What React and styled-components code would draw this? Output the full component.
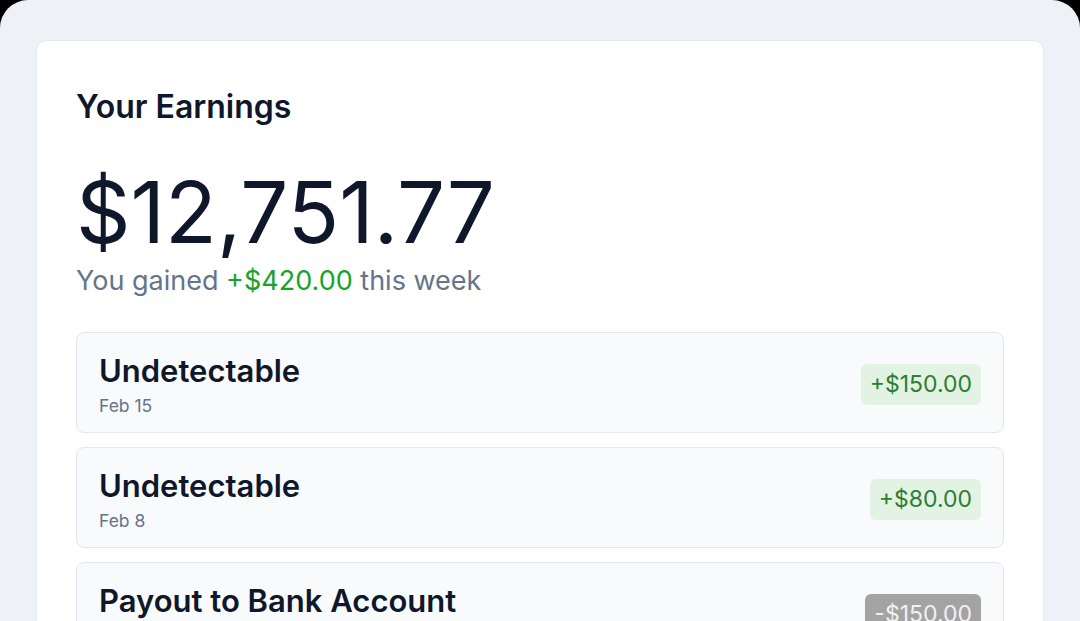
import React from "react";
import styled, { createGlobalStyle } from "styled-components";

const Global = createGlobalStyle`
  html, body { margin: 0; padding: 0; background: #000; overflow: hidden; }
  body { font-family: Inter, "Noto Sans", sans-serif; -webkit-font-smoothing: antialiased; }
`;

const Frame = styled.div`
  height: 621px;
  box-sizing: border-box;
  background: #eef2f7;
  border-radius: 28px 28px 0 0;
  padding: 40px 36px 0 36px;
  overflow: hidden;
`;

const Card = styled.section`
  background: #ffffff;
  border: 1px solid #e2e8f0;
  border-radius: 10px;
  padding: 47px 39px 40px;
  min-height: 700px;
`;

const Title = styled.h2`
  margin: 0;
  font-size: 32px;
  line-height: 38px;
  font-weight: 600;
  color: #0f172a;
`;

const Amount = styled.div`
  margin-top: 44px;
  font-size: 85px;
  line-height: 85px;
  font-weight: 400;
  color: #0f172a;
`;

const Gain = styled.p`
  margin: 10px 0 0;
  font-size: 27px;
  line-height: 32px;
  color: #64748b;
`;

const Green = styled.span`
  color: #17a32b;
`;

const List = styled.ul`
  list-style: none;
  margin: 35px 0 0;
  padding: 0;
  display: flex;
  flex-direction: column;
  gap: 14px;
`;

const Item = styled.li`
  display: flex;
  align-items: center;
  justify-content: space-between;
  background: #f8fafc;
  border: 1px solid #e2e8f0;
  border-radius: 8px;
  padding: 19px 22px 15px;
`;

const Info = styled.div`
  display: flex;
  flex-direction: column;
  gap: 5px;
`;

const ItemTitle = styled.div`
  font-size: 31px;
  line-height: 38px;
  font-weight: 600;
  color: #0f172a;
`;

const ItemDate = styled.div`
  font-size: 17.5px;
  line-height: 22px;
  color: #64748b;
`;

const Badge = styled.span`
  height: 41px;
  line-height: 41px;
  padding: 0 9px;
  border-radius: 6px;
  font-size: 23px;
  background: ${(p) => (p.$negative ? "#a3a3a3" : "#e2f2e3")};
  color: ${(p) => (p.$negative ? "#f1f1f1" : "#2e7d32")};
`;

const items = [
  { title: "Undetectable", date: "Feb 15", amount: "+$150.00" },
  { title: "Undetectable", date: "Feb 8", amount: "+$80.00" },
  { title: "Payout to Bank Account", date: "Feb 1", amount: "-$150.00", negative: true },
];

export default function App() {
  return (
    <>
      <Global />
      <Frame>
        <Card>
          <Title>Your Earnings</Title>
          <Amount>$12,751.77</Amount>
          <Gain>
            You gained <Green>+$420.00</Green> this week
          </Gain>
          <List>
            {items.map((it, i) => (
              <Item key={i}>
                <Info>
                  <ItemTitle>{it.title}</ItemTitle>
                  <ItemDate>{it.date}</ItemDate>
                </Info>
                <Badge $negative={it.negative}>{it.amount}</Badge>
              </Item>
            ))}
          </List>
        </Card>
      </Frame>
    </>
  );
}
